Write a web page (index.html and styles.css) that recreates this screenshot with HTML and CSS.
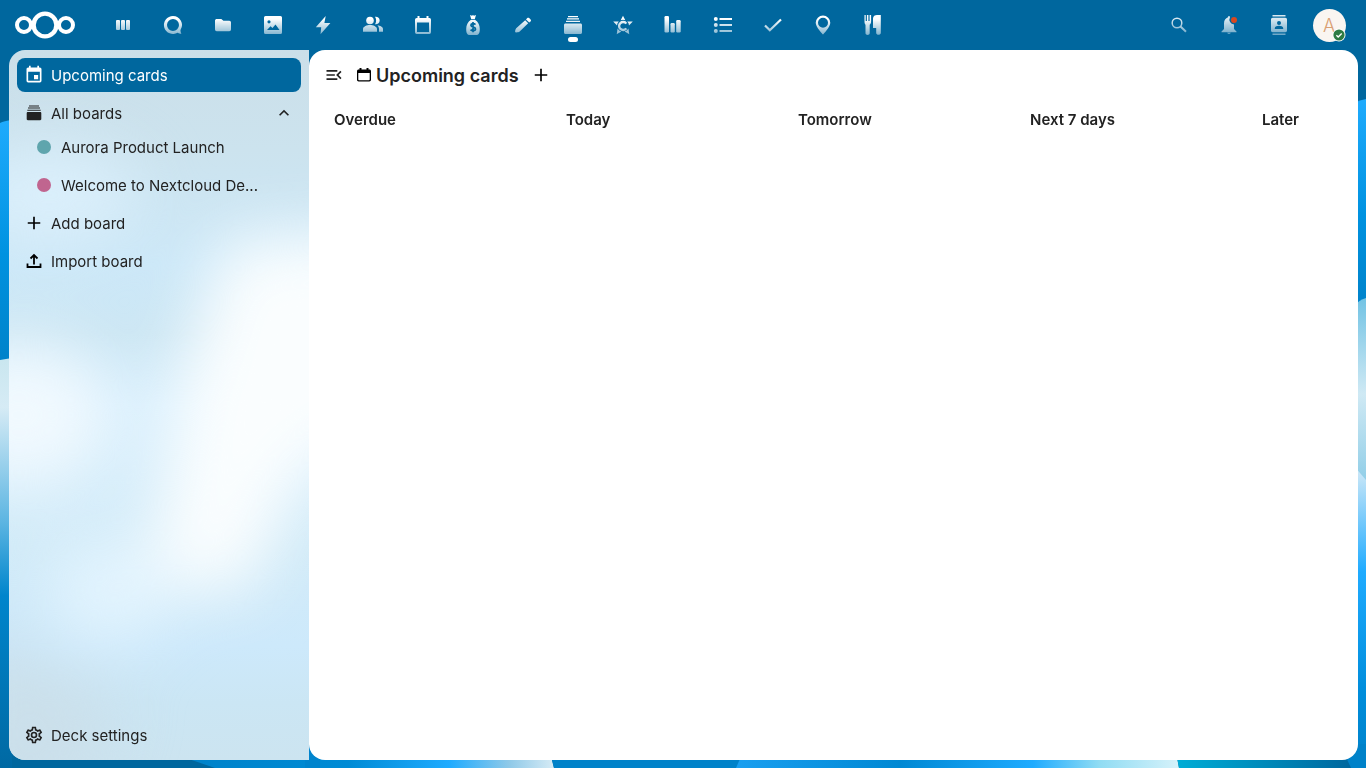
FILE: index.html
```html
<!DOCTYPE html>
<html lang="en">
<head>
    <meta charset="UTF-8">
    <meta name="viewport" content="width=device-width, initial-scale=1.0">
    <title>Upcoming cards - Deck</title>
    <link rel="stylesheet" href="styles.css">
</head>
<body>
    <!-- Wallpaper -->
    <svg class="wallpaper" viewBox="0 0 1366 768" preserveAspectRatio="none" aria-hidden="true">
        <defs>
            <linearGradient id="sky" x1="0" y1="0" x2="0" y2="1">
                <stop offset="0" stop-color="#1fabfd"/>
                <stop offset="0.55" stop-color="#0092e0"/>
                <stop offset="1" stop-color="#0082c9"/>
            </linearGradient>
            <linearGradient id="mist" x1="0" y1="0" x2="0" y2="1">
                <stop offset="0" stop-color="#c9e6ef"/>
                <stop offset="0.12" stop-color="#d6ebf5"/>
                <stop offset="0.4" stop-color="#5cb5e2"/>
                <stop offset="0.58" stop-color="#0085cc"/>
                <stop offset="1" stop-color="#0069a3"/>
            </linearGradient>
            <linearGradient id="teal" x1="0" y1="0" x2="0" y2="1">
                <stop offset="0" stop-color="#72c3e4"/>
                <stop offset="0.5" stop-color="#cfe9f4"/>
                <stop offset="1" stop-color="#8acbe6"/>
            </linearGradient>
            <linearGradient id="drop" x1="0" y1="0" x2="0" y2="1">
                <stop offset="0" stop-color="#d3eaf7"/>
                <stop offset="0.35" stop-color="#1fabff"/>
                <stop offset="0.75" stop-color="#008ddb"/>
                <stop offset="1" stop-color="#0082c9"/>
            </linearGradient>
            <linearGradient id="wave1">
                <stop offset="0" stop-color="#0082c9"/>
                <stop offset="0.45" stop-color="#008bd5"/>
                <stop offset="0.72" stop-color="#1fabff"/>
                <stop offset="0.88" stop-color="#8fc9e8"/>
                <stop offset="1" stop-color="#d6ebf5"/>
            </linearGradient>
            <linearGradient id="wave2">
                <stop offset="0" stop-color="#1a9ff0"/>
                <stop offset="0.37" stop-color="#0088d3"/>
                <stop offset="0.67" stop-color="#1fabff"/>
                <stop offset="0.82" stop-color="#90dcf3"/>
                <stop offset="1" stop-color="#d6f2fa"/>
            </linearGradient>
            <linearGradient id="wave3">
                <stop offset="0" stop-color="#00add6"/>
                <stop offset="1" stop-color="#00679e"/>
            </linearGradient>
        </defs>
        <rect width="1366" height="768" fill="#00679e"/>
        <path d="M0 123Q4 121 12 120V365H0Z" fill="url(#sky)"/>
        <path d="M0 360L12 358V768H0Z" fill="url(#mist)"/>
        <path d="M1354 103Q1360 100 1366 99V310H1354Z" fill="url(#sky)"/>
        <path d="M1354 306Q1359 300 1366 298V490H1354Z" fill="url(#teal)"/>
        <path d="M1354 466L1366 480V768H1354Z" fill="url(#drop)"/>
        <path d="M180 756L215 768H554L550 752Z" fill="url(#wave1)"/>
        <path d="M550 752L554 768H740V752Z" fill="#0082c9"/>
        <path d="M736 768L743 752H1176L1179 768Z" fill="url(#wave2)"/>
        <path d="M1176 752L1179 768H1351L1347 752Z" fill="url(#wave3)"/>
        <path d="M1340 744H1366V768H1351Z" fill="#0082c9"/>
        <path d="M305 740H320V768H305Z" fill="#0084cd"/>
    </svg>

    <header class="topbar">
        <a class="logo" href="#" aria-label="Home">
            <svg width="62" height="30" viewBox="0 0 62 30" fill="none" stroke="#fff" stroke-width="4">
                <circle cx="31" cy="15" r="11.4" stroke-width="4.4"/>
                <circle cx="10" cy="15" r="7"/>
                <circle cx="52" cy="15" r="7"/>
            </svg>
        </a>

        <nav class="apps" aria-label="Applications">
            <a href="#" aria-label="Dashboard"><svg viewBox="0 0 20 20"><rect x="3" y="5" width="4" height="10" rx="1"/><rect x="8" y="5" width="4" height="10" rx="1"/><rect x="13" y="5" width="4" height="10" rx="1"/></svg></a>
            <a href="#" aria-label="Talk"><svg viewBox="0 0 20 20"><path fill-rule="evenodd" d="M10 1a9 9 0 1 0 4.6 16.7c1.2.8 2.5 1.3 3.8 1.1-.8-1-1-2.400-.9-3.900A9 9 0 0 0 10 1zm0 3a6 6 0 1 1 0 12 6 6 0 0 1 0-12z"/></svg></a>
            <a href="#" aria-label="Files"><svg viewBox="0 0 24 24"><path d="M10 4.800H4.500C3.400 4.800 2.400 5.600 2.400 6.700V17.500A2 2 0 0 0 4.400 19.500H19.600A2 2 0 0 0 21.600 17.500V9C21.600 7.900 20.700 7 19.600 7H12.500L10 4.800Z"/></svg></a>
            <a href="#" aria-label="Photos"><svg viewBox="0 0 20 20"><path fill-rule="evenodd" d="M2.500 1h15A1.500 1.500 0 0 1 19 2.500v15a1.500 1.500 0 0 1-1.500 1.500h-15A1.500 1.500 0 0 1 1 17.500v-15A1.500 1.500 0 0 1 2.500 1zM6 5.200a1.600 1.600 0 1 0 0 3.200 1.600 1.600 0 0 0 0-3.200zM4 15h12.500l-4-5.500-3 3.500-2-1.800z"/></svg></a>
            <a href="#" aria-label="Activity"><svg viewBox="0 0 20 20"><path d="M12.700 1 2.800 12.200h5.400L7.500 19.300 17.400 8h-6z"/></svg></a>
            <a href="#" aria-label="Contacts"><svg viewBox="0 0 20 20"><circle cx="7" cy="5.500" r="3.800"/><path d="M0 16.800V14c0-2.500 4-4 7-4s7 1.500 7 4v2.800zM12 1.800a3.800 3.800 0 1 1 0 7.400c1.500-2 1.500-5.400 0-7.400zM14.400 10.300c2.600.4 5.600 1.600 5.600 3.700v2.800h-4V14c0-1.500-.6-2.700-1.600-3.700z"/></svg></a>
            <a href="#" aria-label="Calendar"><svg viewBox="0 0 20 20"><path fill-rule="evenodd" d="M4.500 1h2v2h7V1h2v2h1A1.700 1.700 0 0 1 18 4.700v12.600a1.700 1.700 0 0 1-1.700 1.700H3.700A1.700 1.700 0 0 1 2 17.300V4.700A1.700 1.700 0 0 1 3.700 3h.8zM4 7.500V17h12V7.500z"/></svg></a>
            <a href="#" aria-label="Budget"><svg viewBox="0 0 20 20"><path d="m7 0 2 .8L10 0l1 .8L13 0l-1.200 4H8.200zM8 4.800h4c3.200 2 4.800 5.500 4.800 9.200 0 4-1 6-3.800 6H7c-2.800 0-3.800-2-3.800-6 0-3.700 1.600-7.200 4.800-9.200z"/><path d="M12.400 9.600C11.500 8.200 7.900 8.300 7.900 10.300c0 2.300 4.600 1.400 4.600 3.700 0 2-3.700 2.100-4.900.6M10 7v10.300" fill="none" stroke="#00679e" stroke-width="1.700"/></svg></a>
            <a href="#" aria-label="Notes"><svg viewBox="0 0 20 20"><path d="m12.200 5.200 3 3-8.500 8.300c-1 .9-3.700 1-4.500.8-.2-1 .1-3.200 1-4.100zM13 4.400l1.300-1.300c.6-.6 1.200-.6 1.800 0l1.500 1.500c.6.6.6 1.200 0 1.800L16.200 7.600z"/></svg></a>
            <a class="active" href="#" aria-label="Deck"><svg viewBox="0 0 20 20"><path d="M5 1h10v1.200H5zM4 3.300h12v1.300H4zM3 5.700h14v1.400H3zM2.500 8.400h15c.9 0 1.500.6 1.500 1.500v7.600c0 .9-.6 1.500-1.500 1.500h-15C1.600 19 1 18.400 1 17.500V9.900c0-.9.600-1.500 1.500-1.500z"/></svg></a>
            <a href="#" aria-label="Cospend"><svg viewBox="0 0 20 20"><path d="M10 .8 12.300 5.300a6 6 0 0 0-4.600 0zM.2 6.500h5.600a6 6 0 0 0-1.800 4zM19.800 6.500 16 10.500A6 6 0 0 0 14.200 6.500zM4.600 13.500a6 6 0 0 0 3.800 3L3.700 19.300zM15.400 13.500a6 6 0 0 1-3.800 3l4.700 2.800z"/><path d="M13.300 8.600a4 4 0 1 0 0 4.800" fill="none" stroke="currentColor" stroke-width="2.400"/></svg></a>
            <a href="#" aria-label="Analytics"><svg viewBox="0 0 20 20"><rect x="1.500" y="1" width="4.500" height="16.500" rx="1.200"/><rect x="7.500" y="8" width="4.300" height="9.500" rx="1.200"/><rect x="13.200" y="5" width="4.500" height="12.500" rx="1.200"/></svg></a>
            <a href="#" aria-label="Forms"><svg viewBox="0 0 20 20"><circle cx="2.800" cy="4" r="2"/><circle cx="2.800" cy="10" r="2"/><circle cx="2.800" cy="16" r="2"/><path d="M6.500 3H19v2H6.500zM6.500 9H19v2H6.500zM6.500 15H19v2H6.500z"/></svg></a>
            <a href="#" aria-label="Tasks"><svg viewBox="0 0 20 20"><path d="m2 10.500 4.800 4.700L18 4.500" fill="none" stroke="currentColor" stroke-width="2.200"/></svg></a>
            <a href="#" aria-label="Maps"><svg viewBox="0 0 20 20"><path fill-rule="evenodd" d="M10 .5a7.300 7.300 0 0 0-7.300 7.300C2.700 12.500 10 19.500 10 19.500s7.300-7 7.300-11.700A7.300 7.300 0 0 0 10 .5zm0 2.300a5 5 0 1 1 0 10 5 5 0 0 1 0-10z"/></svg></a>
            <a href="#" aria-label="Cookbook"><svg viewBox="0 0 20 20"><path d="M1.500 0h1.200v6h1.200V0h1.500v6h1.200V0h1.500v6.500c0 1.800-.7 2.800-1.400 3.200v8.600c0 2.200-4.200 2.200-4.200 0V9.700C1.900 9.300 1.500 8.300 1.500 6.500zM10 3.500C10 1 12 0 14 0h3.800v18c0 2.400-4.600 2.400-4.600 0v-5H10z"/></svg></a>
        </nav>

        <div class="tools">
            <button type="button" aria-label="Search"><svg viewBox="0 0 20 20"><g fill="none" stroke="currentColor"><circle cx="8" cy="8" r="4.800" stroke-width="1.500"/><path d="m11.500 11.500 5.500 5.300" stroke-width="2"/></g></svg></button>
            <button type="button" aria-label="Notifications"><svg viewBox="0 0 20 20"><path d="M9 2.300c.2-1.800 1.800-1.800 2 0a5 5 0 0 0 4 7.300v4.400l2.500 2.500v.8H2.500v-.8L5 14V8.500c0-3 1.500-5.300 4-6.200zM8.200 17.800h3.600c-.3 1.500-3.300 1.500-3.600 0z"/></svg><i class="dot"></i></button>
            <button type="button" aria-label="Contacts menu"><svg viewBox="0 0 20 20"><path fill-rule="evenodd" d="M3.500 0h13v1.500h-13zM3.700 2.800h12.600c1 0 1.700.7 1.700 1.700v11c0 1-.7 1.700-1.700 1.700H3.700c-1 0-1.700-.7-1.700-1.700v-11c0-1 .7-1.700 1.700-1.700zM10 6a2 2 0 1 0 0 4 2 2 0 0 0 0-4zm-4.200 8h8.400v-1c0-1.500-2.500-2.300-4.200-2.300S5.800 11.500 5.800 13zM3.500 18.500h13V20h-13z"/></svg></button>
            <button class="account" type="button" aria-label="Settings menu">
                <span class="avatar">A</span>
                <svg class="status" viewBox="0 0 14 14"><circle cx="7" cy="7" r="6.500" fill="#fff"/><circle cx="7" cy="7" r="5.600" fill="#2d7b43"/><path d="m4.400 7.200 1.800 1.800 3.500-3.500" fill="none" stroke="#fff" stroke-width="1.400"/></svg>
            </button>
        </div>
    </header>

    <div class="content">
        <aside class="sidebar">
            <!-- Frosted glass behind the entries -->
            <svg class="glass" viewBox="0 0 300 710" preserveAspectRatio="none" aria-hidden="true">
                <defs>
                    <linearGradient id="frost" x1="0" y1="0" x2="0" y2="1">
                        <stop offset="0" stop-color="#cbdfe9"/>
                        <stop offset="0.14" stop-color="#cce3ee"/>
                        <stop offset="0.3" stop-color="#cce8f8"/>
                        <stop offset="0.4" stop-color="#cde7f4"/>
                        <stop offset="0.5" stop-color="#d8effd"/>
                        <stop offset="0.7" stop-color="#d2ebf8"/>
                        <stop offset="0.84" stop-color="#cde9fb"/>
                        <stop offset="0.92" stop-color="#cbe6f4"/>
                        <stop offset="1" stop-color="#cce4f0"/>
                    </linearGradient>
                    <filter id="blur" x="-100%" y="-100%" width="300%" height="300%" color-interpolation-filters="sRGB">
                        <feGaussianBlur stdDeviation="32"/>
                    </filter>
                </defs>
                <rect width="300" height="710" fill="url(#frost)"/>
                <g filter="url(#blur)">
                    <ellipse cx="40" cy="145" rx="90" ry="45" fill="#dcf0fc"/>
                    <ellipse cx="10" cy="365" rx="90" ry="70" fill="#f1f9fe"/>
                    <ellipse cx="100" cy="540" rx="60" ry="50" fill="#e3f4fe"/>
                    <path d="M380 180L215 190 170 340 140 530 235 545 290 430 380 370Z" fill="#fafdfe"/>
                    <path d="M0 600L110 650 60 760H-40V560Z" fill="#cbdfea"/>
                </g>
            </svg>
            <nav aria-label="Boards">
                <a class="entry selected" href="#">
                    <svg viewBox="0 0 24 24"><path d="M19 19H5V8H19M16 1V3H8V1H6V3H5C3.890 3 3 3.890 3 5V19A2 2 0 0 0 5 21H19A2 2 0 0 0 21 19V5C21 3.890 20.100 3 19 3H18V1M17 12H12V17H17V12Z"/></svg>
                    <span>Upcoming cards</span>
                </a>
                <div class="entry parent">
                    <a class="entry-link" href="#">
                        <svg viewBox="0 0 20 20"><path d="M5 2.500h10v1H5zM4 4.600h12v1H4zM3.300 6.800h13.400v1H3.300zM3.800 9h12.400c.7 0 1.100.5 1.100 1.100v6c0 .7-.5 1.100-1.100 1.100H3.800c-.7 0-1.100-.5-1.100-1.100v-6C2.700 9.500 3.200 9 3.800 9z"/></svg>
                        <span>All boards</span>
                    </a>
                    <button type="button" aria-label="Collapse menu"><svg viewBox="0 0 24 24"><path d="M7.410 15.410 12 10.830l4.590 4.580L18 14l-6-6-6 6z"/></svg></button>
                </div>
                <a class="entry child" href="#"><i class="bullet teal"></i><span>Aurora Product Launch</span></a>
                <a class="entry child" href="#"><i class="bullet pink"></i><span>Welcome to Nextcloud De...</span></a>
                <button class="entry" type="button">
                    <svg class="dark" viewBox="0 0 24 24"><path d="M19.500 13H13V19.500H11V13H4.500V11H11V4.500H13V11H19.500V13Z"/></svg>
                    <span>Add board</span>
                </button>
                <button class="entry" type="button">
                    <svg class="dark" viewBox="0 0 20 20"><path d="M3.500 12.500V16h13v-3.500M10 13.500V4M6.500 7.500 10 4l3.500 3.500" fill="none" stroke="currentColor" stroke-width="1.800"/></svg>
                    <span>Import board</span>
                </button>
            </nav>
            <button class="entry" type="button">
                <svg viewBox="0 0 24 24"><path d="M12 8a4 4 0 0 1 4 4 4 4 0 0 1-4 4 4 4 0 0 1-4-4 4 4 0 0 1 4-4m0 2a2 2 0 0 0-2 2 2 2 0 0 0 2 2 2 2 0 0 0 2-2 2 2 0 0 0-2-2m-2 12c-.25 0-.46-.18-.5-.42l-.37-2.650c-.63-.25-1.170-.59-1.690-.99l-2.490 1.010c-.22.080-.49 0-.61-.22l-2-3.460c-.13-.22-.07-.49.12-.64l2.110-1.660L4.500 12l.070-1-2.110-1.630c-.19-.15-.25-.42-.12-.64l2-3.460c.12-.22.390-.31.610-.22l2.490 1c.52-.39 1.060-.73 1.690-.98l.37-2.650c.04-.24.25-.42.5-.42h4c.25 0 .46.180.5.420l.37 2.650c.63.250 1.170.590 1.690.980l2.490-1c.22-.09.490 0 .61.220l2 3.460c.13.220.070.490-.12.640L19.430 11l.070 1-.07 1 2.110 1.630c.19.150.250.420.120.640l-2 3.460c-.12.220-.390.310-.61.220l-2.490-1c-.52.390-1.060.730-1.690.980l-.37 2.650c-.04.240-.25.420-.5.420h-4m1.250-18-.37 2.610c-1.200.25-2.260.89-3.030 1.780L5.440 7.350l-.75 1.300L6.800 10.200a5.550 5.550 0 0 0 0 3.600l-2.120 1.560.75 1.300 2.430-1.040c.77.880 1.820 1.520 3.010 1.760l.37 2.620h1.520l.37-2.610c1.190-.25 2.240-.89 3.010-1.770l2.430 1.040.75-1.300-2.120-1.550c.4-1.170.4-2.440 0-3.610l2.110-1.550-.75-1.300-2.410 1.040a5.420 5.420 0 0 0-3.030-1.770L12.750 4h-1.500z"/></svg>
                <span>Deck settings</span>
            </button>
        </aside>

        <main class="board">
            <div class="controls">
                <button type="button" aria-label="Close navigation"><svg viewBox="0 0 24 24"><path d="M21 15.610 19.590 17l-5.010-5 5.010-5L21 8.390 17.440 12 21 15.610M3 6h13v2H3V6m0 7v-2h10v2H3m0 5v-2h13v2H3z"/></svg></button>
                <svg class="title-icon" viewBox="0 0 16 16"><path fill-rule="evenodd" d="M3.500 1h2v1.500h5V1h2v1.500h.8c1 0 1.700.7 1.700 1.700v8.600c0 1-.7 1.700-1.700 1.700H2.700c-1 0-1.700-.7-1.700-1.700V4.200c0-1 .7-1.700 1.700-1.700h.8zM2.300 6v6.500c0 .5.300.8.700.8h10c.5 0 .7-.3.700-.8V6z"/></svg>
                <h1>Upcoming cards</h1>
                <button class="dark" type="button" aria-label="Add card"><svg viewBox="0 0 24 24"><path d="M19.500 13H13V19.500H11V13H4.500V11H11V4.500H13V11H19.500V13Z"/></svg></button>
            </div>
            <div class="columns">
                <section><h2>Overdue</h2></section>
                <section><h2>Today</h2></section>
                <section><h2>Tomorrow</h2></section>
                <section><h2>Next 7 days</h2></section>
                <section><h2>Later</h2></section>
            </div>
        </main>
    </div>
</body>
</html>
```
FILE: styles.css
```css
* {
    box-sizing: border-box;
}

body {
    margin: 0;
    min-height: 100vh;
    display: flex;
    flex-direction: column;
    font-family: Inter, "Liberation Sans", sans-serif;
    font-size: 15px;
    line-height: 24px;
    color: #222222;
    background-color: #00679e;
}

a {
    color: inherit;
    text-decoration: none;
}

button {
    padding: 0;
    border: none;
    background: none;
    font: inherit;
    color: inherit;
    cursor: pointer;
}

svg {
    display: block;
    flex-shrink: 0;
    fill: currentColor;
}

h1, h2 {
    margin: 0;
    font-weight: 600;
}

.wallpaper {
    position: fixed;
    inset: 0;
    width: 100%;
    height: 100%;
    z-index: -1;
}

.dark {
    color: #000000;
}

/* Top bar */
.topbar {
    display: flex;
    align-items: center;
    height: 50px;
    padding: 0 12px 0 14px;
    color: #ffffff;
}

.logo {
    margin-right: 22px;
}

.logo svg {
    fill: none;
}

.apps,
.tools {
    display: flex;
}

.tools {
    margin-left: auto;
}

.apps a,
.tools button {
    position: relative;
    display: flex;
    align-items: center;
    justify-content: center;
    width: 50px;
    height: 50px;
}

.apps svg,
.tools svg {
    width: 20px;
    height: 20px;
    mask-image: linear-gradient(#000 20%, rgba(0, 0, 0, 0.5) 100%);
}

.tools svg {
    opacity: 0.85;
}

.apps .active::after {
    content: "";
    position: absolute;
    bottom: 8px;
    width: 10px;
    height: 5px;
    border-radius: 3px;
    background: #ffffff;
}

.dot {
    position: absolute;
    top: 17px;
    right: 17px;
    width: 6px;
    height: 6px;
    border-radius: 50%;
    background: #d9481f;
}

.avatar {
    width: 33px;
    height: 33px;
    border-radius: 50%;
    background: #faf5f1;
    color: #d9a073;
    font-size: 18px;
    font-weight: 300;
    line-height: 34px;
    text-align: center;
}

.tools .status {
    position: absolute;
    right: 8px;
    bottom: 8px;
    width: 14px;
    height: 14px;
    opacity: 1;
    mask-image: none;
}

/* Layout */
.content {
    flex: 1;
    display: flex;
    padding: 0 8px 8px 9px;
}

.sidebar {
    position: relative;
    isolation: isolate;
    overflow: hidden;
    display: flex;
    flex-direction: column;
    justify-content: space-between;
    width: 300px;
    flex-shrink: 0;
    padding: 8px;
    border-radius: 16px 0 0 16px;
}

.glass {
    position: absolute;
    inset: 0;
    width: 100%;
    height: 100%;
    z-index: -1;
}

.board {
    flex: 1;
    min-width: 0;
    overflow: hidden;
    border-radius: 16px;
    background: #ffffff;
}

/* Sidebar entries */
.sidebar nav {
    display: flex;
    flex-direction: column;
    gap: 4px;
}

.entry {
    display: flex;
    align-items: center;
    width: 100%;
    height: 34px;
    border-radius: 8px;
    text-align: left;
}

.entry svg {
    width: 20px;
    height: 20px;
    margin: 0 7px;
}

.entry span,
.controls h1 {
    padding-top: 2px;
}

.entry-link {
    display: flex;
    flex: 1;
    align-items: center;
}

.selected {
    background: #00679e;
    color: #ffffff;
}

.parent {
    margin-bottom: -4px;
}

.child {
    padding-left: 10px;
}

.bullet {
    width: 14px;
    height: 14px;
    margin: 0 10px;
    border-radius: 50%;
}

.teal {
    background: #5fa5ad;
}

.pink {
    background: #c0658f;
}

/* Board */
.controls {
    display: flex;
    align-items: center;
    padding: 8px;
}

.controls button {
    display: flex;
    align-items: center;
    justify-content: center;
    width: 34px;
    height: 34px;
}

.controls button svg {
    width: 20px;
    height: 20px;
}

.title-icon {
    width: 16px;
    height: 16px;
    margin: 0 4px 0 5px;
    color: #000000;
}

.controls h1 {
    margin-right: 5px;
    font-size: 18px;
}

.columns {
    display: flex;
    padding: 8px 25px;
}

.columns section {
    flex: 0 0 232px;
}

.columns h2 {
    font-size: 15px;
}
```
